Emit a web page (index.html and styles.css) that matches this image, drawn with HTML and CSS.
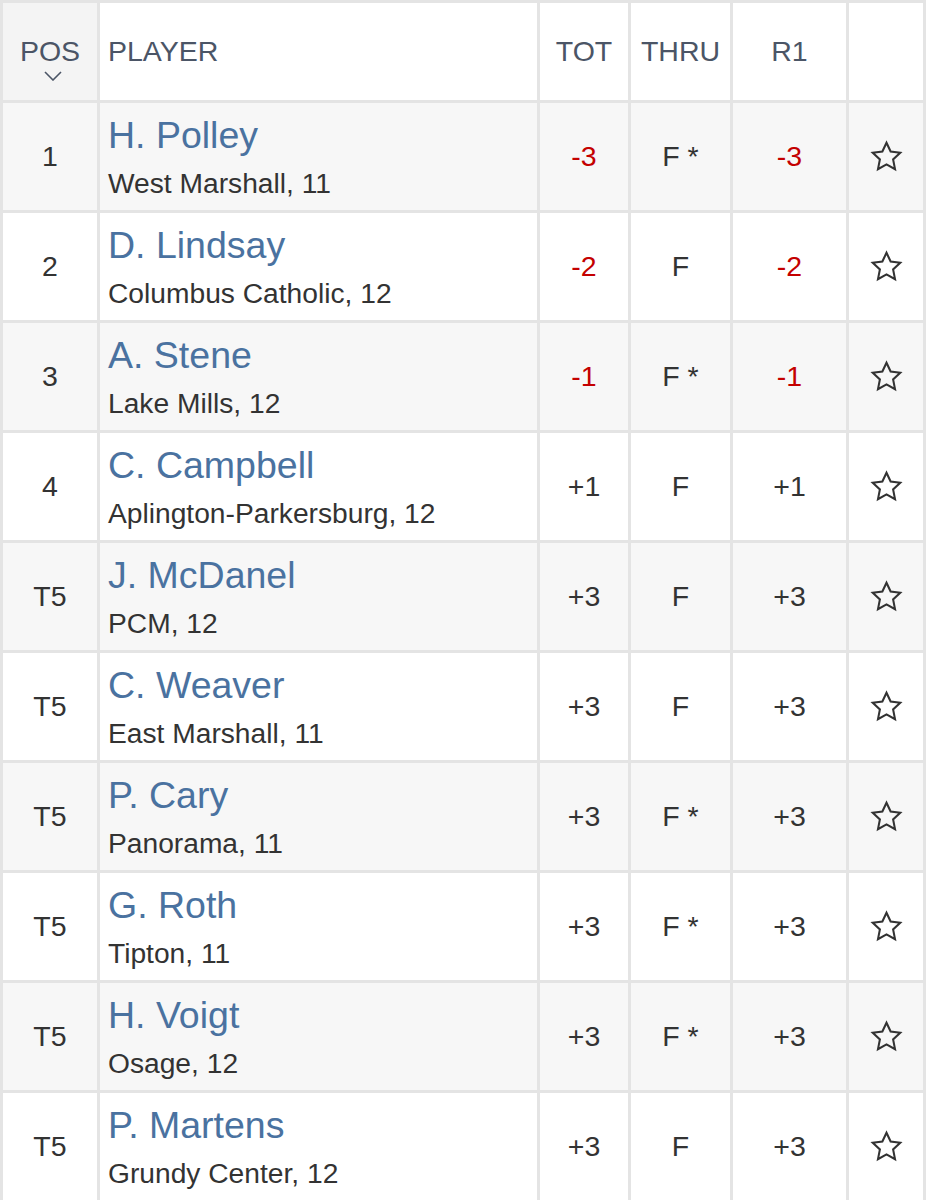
FILE: index.html
```html
<!DOCTYPE html>
<html>
<head>
<meta charset="utf-8">
<link rel="stylesheet" href="styles.css">
</head>
<body>
<table class="board">
  <colgroup>
    <col class="c-pos"><col class="c-player"><col class="c-tot"><col class="c-thru"><col class="c-r1"><col class="c-star">
  </colgroup>
  <thead>
    <tr class="head">
      <th class="pos sorted"><span class="pos-label">POS</span><svg class="chev" viewBox="0 0 18 10"><path d="M1 1 L9 9 L17 1" /></svg></th>
      <th class="player">PLAYER</th>
      <th>TOT</th>
      <th>THRU</th>
      <th>R1</th>
      <th></th>
    </tr>
  </thead>
  <tbody>
    <tr class="odd">
      <td class="pos">1</td>
      <td class="player"><div class="name">H. Polley</div><div class="school">West Marshall, 11</div></td>
      <td class="neg">-3</td><td>F *</td><td class="neg">-3</td>
      <td><svg class="star" viewBox="0 0 24 24"><polygon points="12,2 15,8.4 22,9.3 16.8,14.1 18.2,21.2 12,17.7 5.8,21.2 7.2,14.1 2,9.3 9,8.4"/></svg></td>
    </tr>
    <tr>
      <td class="pos">2</td>
      <td class="player"><div class="name">D. Lindsay</div><div class="school">Columbus Catholic, 12</div></td>
      <td class="neg">-2</td><td>F</td><td class="neg">-2</td>
      <td><svg class="star" viewBox="0 0 24 24"><polygon points="12,2 15,8.4 22,9.3 16.8,14.1 18.2,21.2 12,17.7 5.8,21.2 7.2,14.1 2,9.3 9,8.4"/></svg></td>
    </tr>
    <tr class="odd">
      <td class="pos">3</td>
      <td class="player"><div class="name">A. Stene</div><div class="school">Lake Mills, 12</div></td>
      <td class="neg">-1</td><td>F *</td><td class="neg">-1</td>
      <td><svg class="star" viewBox="0 0 24 24"><polygon points="12,2 15,8.4 22,9.3 16.8,14.1 18.2,21.2 12,17.7 5.8,21.2 7.2,14.1 2,9.3 9,8.4"/></svg></td>
    </tr>
    <tr>
      <td class="pos">4</td>
      <td class="player"><div class="name">C. Campbell</div><div class="school">Aplington-Parkersburg, 12</div></td>
      <td>+1</td><td>F</td><td>+1</td>
      <td><svg class="star" viewBox="0 0 24 24"><polygon points="12,2 15,8.4 22,9.3 16.8,14.1 18.2,21.2 12,17.7 5.8,21.2 7.2,14.1 2,9.3 9,8.4"/></svg></td>
    </tr>
    <tr class="odd">
      <td class="pos">T5</td>
      <td class="player"><div class="name">J. McDanel</div><div class="school">PCM, 12</div></td>
      <td>+3</td><td>F</td><td>+3</td>
      <td><svg class="star" viewBox="0 0 24 24"><polygon points="12,2 15,8.4 22,9.3 16.8,14.1 18.2,21.2 12,17.7 5.8,21.2 7.2,14.1 2,9.3 9,8.4"/></svg></td>
    </tr>
    <tr>
      <td class="pos">T5</td>
      <td class="player"><div class="name">C. Weaver</div><div class="school">East Marshall, 11</div></td>
      <td>+3</td><td>F</td><td>+3</td>
      <td><svg class="star" viewBox="0 0 24 24"><polygon points="12,2 15,8.4 22,9.3 16.8,14.1 18.2,21.2 12,17.7 5.8,21.2 7.2,14.1 2,9.3 9,8.4"/></svg></td>
    </tr>
    <tr class="odd">
      <td class="pos">T5</td>
      <td class="player"><div class="name">P. Cary</div><div class="school">Panorama, 11</div></td>
      <td>+3</td><td>F *</td><td>+3</td>
      <td><svg class="star" viewBox="0 0 24 24"><polygon points="12,2 15,8.4 22,9.3 16.8,14.1 18.2,21.2 12,17.7 5.8,21.2 7.2,14.1 2,9.3 9,8.4"/></svg></td>
    </tr>
    <tr>
      <td class="pos">T5</td>
      <td class="player"><div class="name">G. Roth</div><div class="school">Tipton, 11</div></td>
      <td>+3</td><td>F *</td><td>+3</td>
      <td><svg class="star" viewBox="0 0 24 24"><polygon points="12,2 15,8.4 22,9.3 16.8,14.1 18.2,21.2 12,17.7 5.8,21.2 7.2,14.1 2,9.3 9,8.4"/></svg></td>
    </tr>
    <tr class="odd">
      <td class="pos">T5</td>
      <td class="player"><div class="name">H. Voigt</div><div class="school">Osage, 12</div></td>
      <td>+3</td><td>F *</td><td>+3</td>
      <td><svg class="star" viewBox="0 0 24 24"><polygon points="12,2 15,8.4 22,9.3 16.8,14.1 18.2,21.2 12,17.7 5.8,21.2 7.2,14.1 2,9.3 9,8.4"/></svg></td>
    </tr>
    <tr>
      <td class="pos">T5</td>
      <td class="player"><div class="name">P. Martens</div><div class="school">Grundy Center, 12</div></td>
      <td>+3</td><td>F</td><td>+3</td>
      <td><svg class="star" viewBox="0 0 24 24"><polygon points="12,2 15,8.4 22,9.3 16.8,14.1 18.2,21.2 12,17.7 5.8,21.2 7.2,14.1 2,9.3 9,8.4"/></svg></td>
    </tr>
  </tbody>
</table>
</body>
</html>
```
FILE: styles.css
```css
html, body {
  margin: 0;
  padding: 0;
  background: #e4e4e4;
}
body {
  font-family: "Liberation Sans", Arial, sans-serif;
  color: #333;
}
.board {
  width: 926px;
  table-layout: fixed;
  border-collapse: separate;
  border-spacing: 3px;
  background: #e4e4e4;
}
.c-pos { width: 94px; }
.c-player { width: 437px; }
.c-tot { width: 88px; }
.c-thru { width: 99px; }
.c-r1 { width: 113px; }
.c-star { width: 74px; }

.board th, .board td {
  padding: 0;
  text-align: center;
  vertical-align: middle;
  background: #fff;
}
.board th {
  height: 97px;
  font-size: 28.5px;
  font-weight: normal;
  color: #4b5566;
}
.board th.sorted {
  position: relative;
  background: #f4f4f4;
}
.chev {
  position: absolute;
  left: 41px;
  top: 68px;
  width: 18px;
  height: 10px;
  fill: none;
  stroke: #4b5566;
  stroke-width: 1.6;
}
.board td {
  height: 107px;
  font-size: 28.5px;
  color: #333;
}
.board tr.odd td {
  background: #f7f7f7;
}
.board .player {
  text-align: left;
  padding-left: 8px;
}
.name {
  font-size: 37.5px;
  line-height: 44px;
  color: #4a72a0;
}
.school {
  font-size: 28.2px;
  line-height: 34px;
  margin-top: 9px;
  color: #333;
}
.neg {
  color: #c40000 !important;
}
.star {
  width: 33px;
  height: 33px;
  display: block;
  margin: 0 auto;
  fill: none;
  stroke: #333;
  stroke-width: 1.5;
  stroke-linejoin: miter;
}
```
